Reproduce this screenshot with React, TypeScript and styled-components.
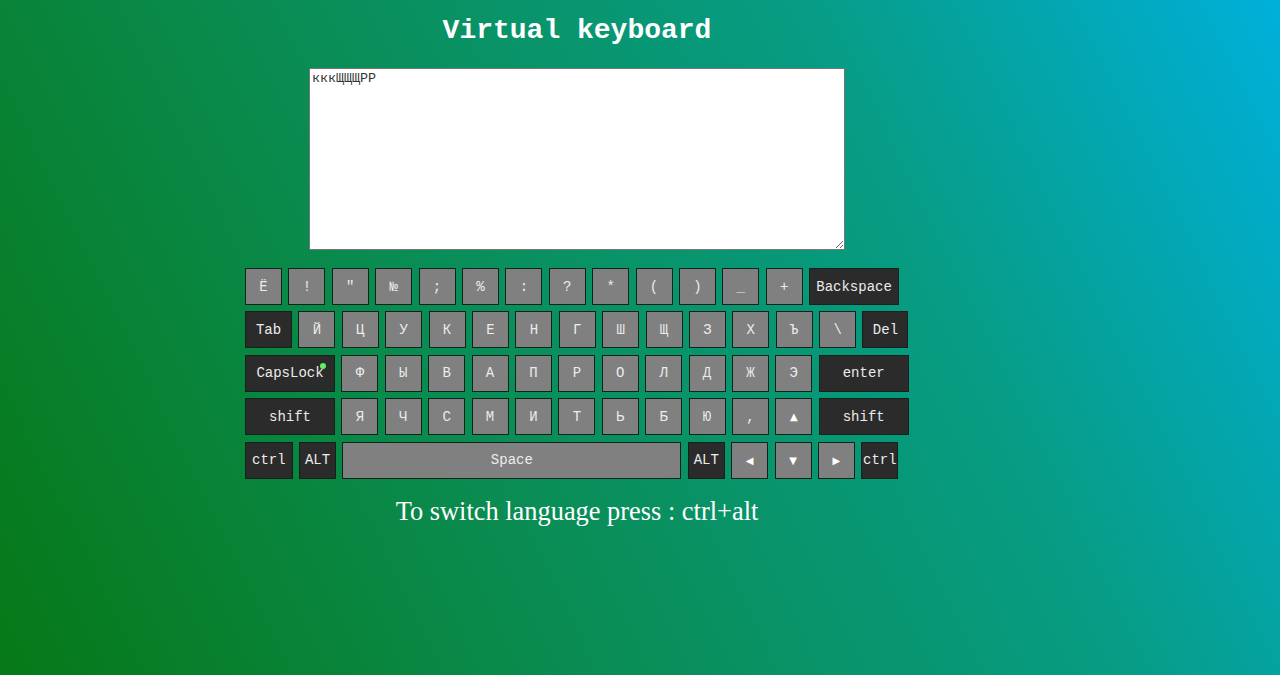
import React from "react";
import styled, { createGlobalStyle } from "styled-components";

const GlobalStyle = createGlobalStyle`
  html, body {
    margin: 0;
    padding: 0;
    height: 100%;
  }
  body {
    min-height: 675px;
    background: linear-gradient(64deg, #067816 0%, #0a8d55 38%, #079c84 70%, #00b0da 100%);
    font-family: "Liberation Serif", serif;
  }
`;

const Page = styled.div`
  width: 1154px;
  display: flex;
  flex-direction: column;
  align-items: center;
`;

const Title = styled.h1`
  margin: 15px 0 0;
  font-family: "Liberation Mono", "Courier New", monospace;
  font-weight: bold;
  font-size: 28px;
  line-height: 32px;
  color: #ffffff;
`;

const TextArea = styled.textarea`
  margin-top: 21px;
  width: 536px;
  height: 182px;
  box-sizing: border-box;
  border: 1px solid #767676;
  padding: 2px;
  font-family: "Liberation Mono", "Courier New", monospace;
  font-size: 13.33px;
  color: #333;
  background: #fff;
  outline: none;
`;

const Keyboard = styled.div`
  margin-top: 18px;
  width: 664px;
  display: flex;
  flex-direction: column;
  gap: 6.4px;
`;

const Row = styled.div`
  display: flex;
  gap: 6.4px;
`;

const Key = styled.div<{ $w?: number; $dark?: boolean }>`
  position: relative;
  box-sizing: border-box;
  width: ${(p) => p.$w ?? 37}px;
  height: 37px;
  flex: none;
  display: flex;
  align-items: center;
  justify-content: center;
  border: 1px solid #0d241a;
  background: ${(p) => (p.$dark ? "#2b2b2b" : "#808080")};
  color: #ececec;
  font-family: "Liberation Mono", "Courier New", monospace;
  font-size: 14px;
  white-space: nowrap;
  overflow: visible;
`;

const Arrow = styled.span`
  font-family: "DejaVu Sans", sans-serif;
  font-size: 10px;
  color: #ffffff;
`;

const Indicator = styled.span`
  position: absolute;
  top: 7px;
  right: 8px;
  width: 6px;
  height: 6px;
  border-radius: 50%;
  background: #66ee66;
`;

const Hint = styled.p`
  margin: 17px 0 0;
  font-family: "Liberation Serif", "Times New Roman", serif;
  font-size: 26.4px;
  line-height: 30px;
  color: #ffffff;
`;

const row1 = ["Ё", "!", '"', "№", ";", "%", ":", "?", "*", "(", ")", "_", "+"];
const row2 = ["Й", "Ц", "У", "К", "Е", "Н", "Г", "Ш", "Щ", "З", "Х", "Ъ", "\\"];
const row3 = ["Ф", "Ы", "В", "А", "П", "Р", "О", "Л", "Д", "Ж", "Э"];
const row4 = ["Я", "Ч", "С", "М", "И", "Т", "Ь", "Б", "Ю", ","];

export default function App() {
  return (
    <>
      <GlobalStyle />
      <Page>
        <Title>Virtual keyboard</Title>
        <TextArea defaultValue="кккЩЩЩРР" />
        <Keyboard>
          <Row>
            {row1.map((k) => (
              <Key key={k}>{k}</Key>
            ))}
            <Key $w={90} $dark>Backspace</Key>
          </Row>
          <Row>
            <Key $w={47} $dark>Tab</Key>
            {row2.map((k) => (
              <Key key={k}>{k}</Key>
            ))}
            <Key $w={46} $dark>Del</Key>
          </Row>
          <Row>
            <Key $w={90} $dark>
              CapsLock
              <Indicator />
            </Key>
            {row3.map((k) => (
              <Key key={k}>{k}</Key>
            ))}
            <Key $w={90} $dark>enter</Key>
          </Row>
          <Row>
            <Key $w={90} $dark>shift</Key>
            {row4.map((k) => (
              <Key key={k}>{k}</Key>
            ))}
            <Key>
              <Arrow>▲</Arrow>
            </Key>
            <Key $w={90} $dark>shift</Key>
          </Row>
          <Row>
            <Key $w={47.6} $dark>ctrl</Key>
            <Key $dark>ALT</Key>
            <Key $w={339}>Space</Key>
            <Key $dark>ALT</Key>
            <Key>
              <Arrow>◀</Arrow>
            </Key>
            <Key>
              <Arrow>▼</Arrow>
            </Key>
            <Key>
              <Arrow>▶</Arrow>
            </Key>
            <Key $dark>ctrl</Key>
          </Row>
        </Keyboard>
        <Hint>To switch language press : ctrl+alt</Hint>
      </Page>
    </>
  );
}
